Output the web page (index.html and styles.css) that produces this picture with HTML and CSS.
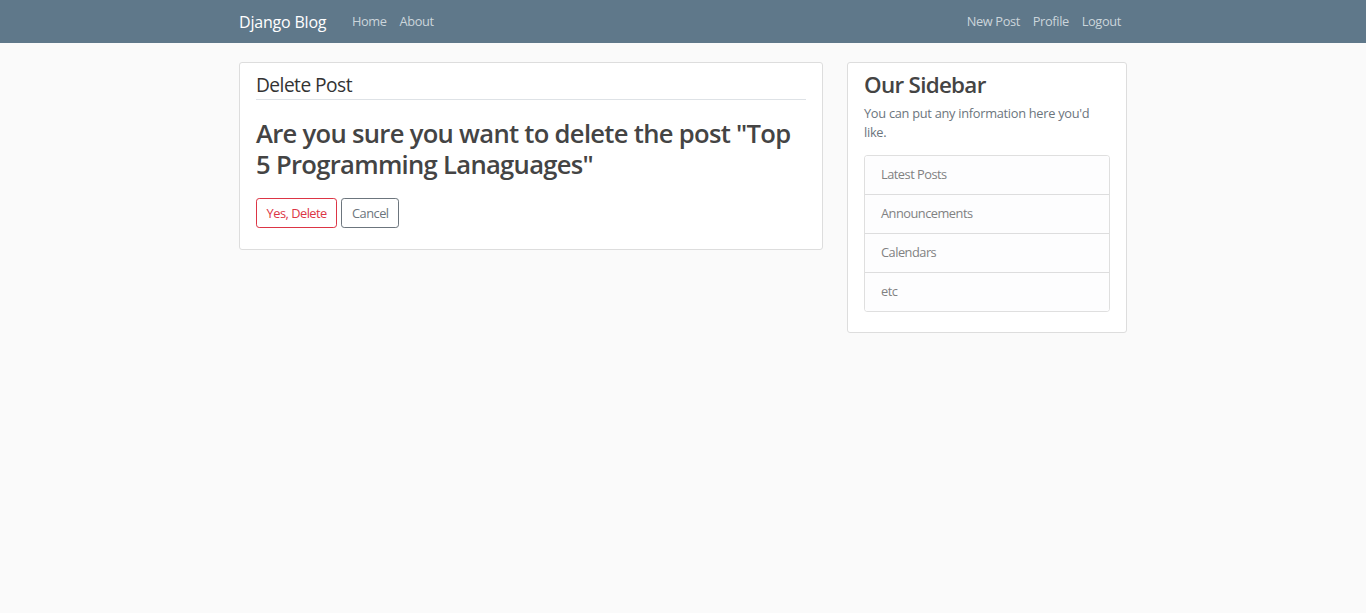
FILE: index.html
```html
<!DOCTYPE html>
<html lang="en">
<head>
<meta charset="utf-8">
<title>Django Blog</title>
<link rel="stylesheet" href="styles.css">
</head>
<body>
<header class="site-header">
  <nav class="navbar">
    <div class="container nav-inner">
      <a class="brand" href="#">Django Blog</a>
      <div class="nav-left">
        <a class="nav-link" href="#">Home</a>
        <a class="nav-link" href="#">About</a>
      </div>
      <div class="nav-right">
        <a class="nav-link" href="#">New Post</a>
        <a class="nav-link" href="#">Profile</a>
        <a class="nav-link" href="#">Logout</a>
      </div>
    </div>
  </nav>
</header>
<main class="container main">
  <div class="col-main">
    <div class="content-section">
      <form class="form">
        <fieldset class="fieldset">
          <legend class="legend">Delete Post</legend>
          <h2 class="confirm">Are you sure you want to delete the post "Top 5 Programming Lanaguages"</h2>
        </fieldset>
        <div class="form-group">
          <button class="btn btn-danger" type="button">Yes, Delete</button>
          <a class="btn btn-secondary" href="#">Cancel</a>
        </div>
      </form>
    </div>
  </div>
  <div class="col-side">
    <div class="content-section">
      <h3 class="side-title">Our Sidebar</h3>
      <p class="muted">You can put any information here you'd like.</p>
      <ul class="list-group">
        <li class="list-item">Latest Posts</li>
        <li class="list-item">Announcements</li>
        <li class="list-item">Calendars</li>
        <li class="list-item">etc</li>
      </ul>
    </div>
  </div>
</main>
</body>
</html>
```
FILE: styles.css
```css
* { box-sizing: border-box; }
html, body { margin: 0; padding: 0; }
body {
  background: #fafafa;
  color: #333333;
  font-family: "Open Sans", "Noto Sans", "Liberation Sans", sans-serif;
  font-size: 12.8px;
  line-height: 1.5;
  letter-spacing: -0.5px;
}
a { text-decoration: none; }
.container {
  width: 912px;
  margin: 0 auto;
  padding: 0 12px;
}
.navbar {
  background: #5f788a;
  height: 43px;
}
.nav-inner {
  display: flex;
  align-items: center;
  height: 43px;
}
.brand {
  color: #ffffff;
  font-size: 16px;
  letter-spacing: -0.2px;
  margin-right: 19.2px;
}
.nav-left, .nav-right { display: flex; }
.nav-right { margin-left: auto; }
.nav-link {
  color: #cbd5db;
  padding: 0 6.4px;
  font-size: 12.8px;
  letter-spacing: -0.35px;
}
.nav-right .nav-link:last-child { padding-right: 6px; }
.main {
  display: flex;
  gap: 24px;
  padding-top: 19px;
}
.col-main { width: 584px; }
.col-side { width: 280px; }
.content-section {
  background: #ffffff;
  padding: 8px 16px;
  border: 1px solid #dddddd;
  border-radius: 3px;
  margin-bottom: 16px;
}
.form { margin: 0; }
.fieldset {
  border: 0;
  margin: 0 0 12px;
  padding: 0;
  min-width: 0;
}
.legend {
  display: block;
  width: 100%;
  padding: 0;
  font-size: 19.2px;
  line-height: 28px;
  letter-spacing: -0.55px;
  color: #333333;
  border-bottom: 1px solid #dee2e6;
  margin-bottom: 19px;
}
.confirm {
  font-size: 25.6px;
  font-weight: 600;
  line-height: 30.5px;
  letter-spacing: -0.7px;
  color: #444444;
  margin: 0 0 6px;
}
.form-group {
  margin-bottom: 12.8px;
  display: flex;
  gap: 4px;
}
.btn {
  display: inline-block;
  font-family: inherit;
  font-size: 12.8px;
  letter-spacing: -0.5px;
  line-height: 19px;
  padding: 4.5px 9.6px;
  border: 1px solid;
  border-radius: 3.2px;
  background: transparent;
  cursor: pointer;
}
.btn-danger { color: #dc3545; border-color: #dc3545; }
.btn-secondary { color: #6c757d; border-color: #6c757d; }
.side-title {
  font-size: 22.4px;
  font-weight: 600;
  line-height: 27px;
  letter-spacing: -0.7px;
  color: #444444;
  margin: 0 0 6px;
}
.muted {
  color: #6c757d;
  line-height: 19px;
  letter-spacing: -0.28px;
  margin: 0 0 12.5px;
}
.list-group {
  list-style: none;
  padding: 0;
  margin: 0 0 12.5px;
  border: 1px solid rgba(0,0,0,.125);
  border-radius: 3.2px;
  overflow: hidden;
}
.list-item {
  background: #fdfdfe;
  color: #818182;
  line-height: 19px;
  padding: 9.5px 16px;
  border-top: 1px solid rgba(0,0,0,.125);
}
.list-item:first-child { border-top: 0; }
```
